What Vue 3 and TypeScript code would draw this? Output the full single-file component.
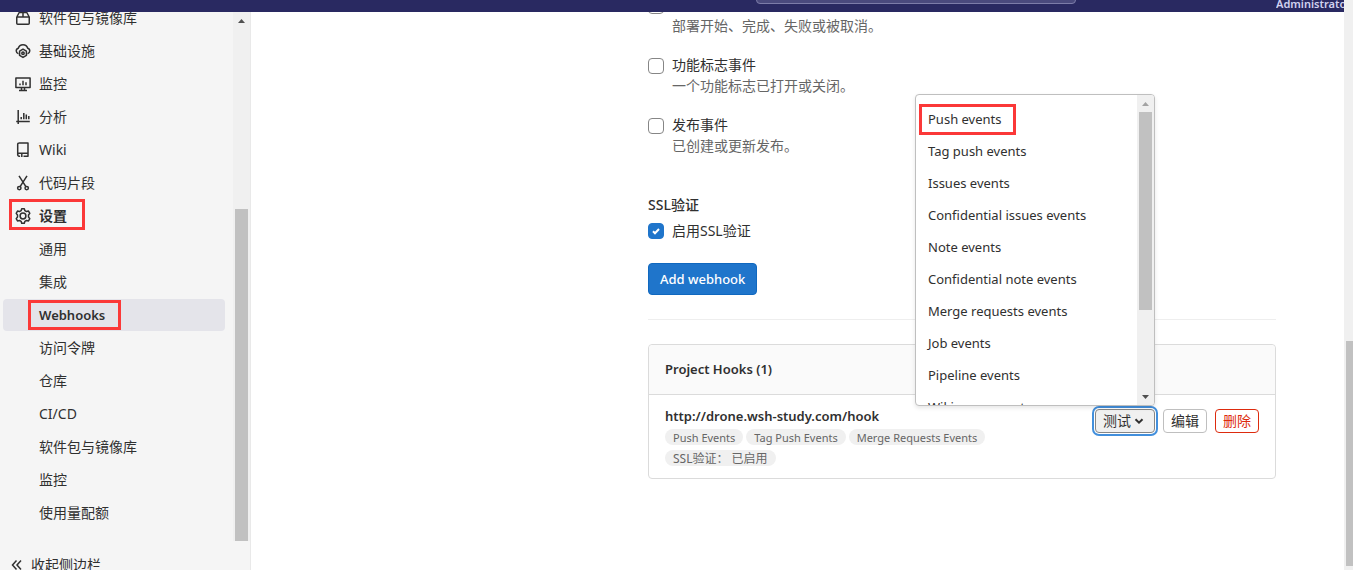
<script setup lang="ts">
import { ref } from 'vue'

interface NavItem {
  label: string
  icon: string
  marked?: boolean
}

interface SubItem {
  label: string
  active?: boolean
}

const navItems: NavItem[] = [
  { label: '软件包与镜像库', icon: 'package' },
  { label: '基础设施', icon: 'cloud' },
  { label: '监控', icon: 'monitor' },
  { label: '分析', icon: 'chart' },
  { label: 'Wiki', icon: 'book' },
  { label: '代码片段', icon: 'snippet' },
  { label: '设置', icon: 'settings', marked: true },
]

const subItems: SubItem[] = [
  { label: '通用' },
  { label: '集成' },
  { label: 'Webhooks', active: true },
  { label: '访问令牌' },
  { label: '仓库' },
  { label: 'CI/CD' },
  { label: '软件包与镜像库' },
  { label: '监控' },
  { label: '使用量配额' },
]

const triggers = ref([
  { id: 'deploy', label: '部署事件', help: '部署开始、完成、失败或被取消。', on: false },
  { id: 'flag', label: '功能标志事件', help: '一个功能标志已打开或关闭。', on: false },
  { id: 'release', label: '发布事件', help: '已创建或更新发布。', on: false },
])
const sslEnabled = ref(true)
const menuOpen = ref(true)

const testEvents: string[] = [
  'Push events',
  'Tag push events',
  'Issues events',
  'Confidential issues events',
  'Note events',
  'Confidential note events',
  'Merge requests events',
  'Job events',
  'Pipeline events',
  'Wiki page events',
]

const hookBadges: string[] = ['Push Events', 'Tag Push Events', 'Merge Requests Events']
</script>

<template>
  <div class="app">
    <div class="view">
      <header class="topbar">
        <input class="search" type="text" aria-label="Search" />
        <a class="user" href="#">Administrator</a>
      </header>

      <div class="body">
        <aside class="sidebar">
          <div class="side-scroll">
            <nav class="side-nav">
              <ul class="nav-list">
                <li v-for="item in navItems" :key="item.icon">
                  <a href="#" class="nav-link" :class="{ current: item.marked }">
                    <svg class="icon" viewBox="0 0 16 16" aria-hidden="true">
                      <g v-if="item.icon === 'package'">
                        <path d="M1.75 7h12.500v6.200a1 1 0 0 1-1 1H2.750a1 1 0 0 1-1-1zM1.750 7 4.200 2.500h7.600L14.250 7M8 2.500V7" />
                      </g>
                      <g v-else-if="item.icon === 'cloud'">
                        <path d="M3.500 10.800A2.900 2.900 0 0 1 3.300 5.200 4.900 4.900 0 0 1 12.700 5.200a2.900 2.900 0 0 1-.2 5.600" />
                        <path d="M8 6.200 11.400 8.200v4.200L8 14.400 4.600 12.400V8.200z" />
                        <circle cx="8" cy="10.300" r="1.200" />
                      </g>
                      <g v-else-if="item.icon === 'monitor'">
                        <path d="M.9 2.100h14.200v9.400H.9zM6.500 11.500v2.700M9.500 11.500v2.700M4 14.400h8M5 7.500v1.800M8 4.800v4.500M11 6.300v3" />
                      </g>
                      <g v-else-if="item.icon === 'chart'">
                        <path d="M3.200 1v14M1.200 12.400h13.600M6.200 8v2.300M8.800 4v6.300M11.300 5.500v4.800M13.800 7v3.300" />
                      </g>
                      <g v-else-if="item.icon === 'book'">
                        <path d="M4 .9h9v10.400H4A1.500 1.500 0 0 0 2.700 13M2.700 13V2.300A1.400 1.400 0 0 1 4.100.9M2.700 12.800a1.400 1.400 0 0 0 1.400 1.400h1M13 11v3.200H8.500M6.800 11.500V15" />
                      </g>
                      <g v-else-if="item.icon === 'snippet'">
                        <path d="M4 .8 10.900 11.600M12 .8 5.100 11.600" />
                        <circle cx="4.300" cy="13.100" r="1.700" />
                        <circle cx="11.700" cy="13.100" r="1.700" />
                      </g>
                      <g v-else>
                        <path d="M6.700.8h2.600l.6 1.900 1.600.9 2-.5 1.300 2.300L13.500 7v2l1.300 1.600-1.300 2.300-2-.5-1.600.9-.6 1.900H6.700l-.6-1.900-1.600-.9-2 .5-1.300-2.300L2.500 9V7L1.200 5.400l1.300-2.300 2 .5 1.600-.9z" />
                        <circle cx="8" cy="8" r="2.900" />
                      </g>
                    </svg>
                    <span>{{ item.label }}</span>
                    <span v-if="item.marked" class="mark mark-settings"></span>
                  </a>
                </li>
                <li v-for="sub in subItems" :key="sub.label">
                  <a href="#" class="nav-link sub" :class="{ active: sub.active }">
                    <span>{{ sub.label }}</span>
                    <span v-if="sub.active" class="mark mark-webhooks"></span>
                  </a>
                </li>
              </ul>
            </nav>
            <div class="track side-track">
              <svg class="arrow dark" viewBox="0 0 17 17" aria-hidden="true"><path d="M5 11h7L8.500 7z" /></svg>
              <div class="space-before"></div>
              <div class="thumb"></div>
            </div>
          </div>
          <div class="side-foot">
            <button type="button" class="collapse">
              <svg class="chevrons" viewBox="0 0 12 12" aria-hidden="true">
                <path d="M5.500 1.500 1.500 6l4 4.500M10 1.500 6 6l4 4.500" />
              </svg>
              <span>收起侧边栏</span>
            </button>
          </div>
        </aside>

        <main class="content">
          <div class="column">
            <form @submit.prevent>
              <div v-for="t in triggers" :key="t.id" class="check">
                <input :id="t.id" v-model="t.on" type="checkbox" class="box" />
                <div>
                  <label :for="t.id" class="event">{{ t.label }}</label>
                  <p class="help">{{ t.help }}</p>
                </div>
              </div>
              <h4 class="group-title">SSL验证</h4>
              <div class="check ssl">
                <input id="ssl" v-model="sslEnabled" type="checkbox" class="box" />
                <label for="ssl">启用SSL验证</label>
              </div>
              <button type="submit" class="primary">Add webhook</button>
            </form>
            <hr class="rule" />
            <section class="card">
              <h5 class="card-head">Project Hooks (1)</h5>
              <div class="hook">
                <div class="hook-info">
                  <div class="hook-url">http://drone.wsh-study.com/hook</div>
                  <div class="badges">
                    <span v-for="b in hookBadges" :key="b" class="badge">{{ b }}</span>
                  </div>
                  <div class="badges">
                    <span class="badge state">SSL验证： 已启用</span>
                  </div>
                </div>
                <div class="actions">
                  <div class="dropdown">
                    <button type="button" class="btn focused" :aria-expanded="menuOpen" @click="menuOpen = !menuOpen">
                      <span>测试</span>
                      <svg class="caret" viewBox="0 0 10 10" aria-hidden="true"><path d="M1.500 3.300 5 6.700l3.500-3.400" /></svg>
                    </button>
                    <div v-if="menuOpen" class="menu">
                      <ul class="menu-list">
                        <li v-for="(e, i) in testEvents" :key="e">
                          <button type="button" class="menu-item">
                            {{ e }}
                            <span v-if="i === 0" class="mark mark-push"></span>
                          </button>
                        </li>
                      </ul>
                      <div class="track menu-track">
                        <svg class="arrow light" viewBox="0 0 17 17" aria-hidden="true"><path d="M5 11h7L8.500 7z" /></svg>
                        <div class="thumb"></div>
                        <svg class="arrow dark" viewBox="0 0 17 17" aria-hidden="true"><path d="M5 7h7L8.500 11z" /></svg>
                      </div>
                    </div>
                  </div>
                  <button type="button" class="btn">编辑</button>
                  <button type="button" class="btn danger">删除</button>
                </div>
              </div>
            </section>
          </div>
        </main>
      </div>
    </div>
    <div class="page-track">
      <div class="space-before"></div>
      <div class="thumb"></div>
    </div>
  </div>
</template>

<style>
body {
  margin: 0;
}
</style>

<style scoped>
* {
  box-sizing: border-box;
}

.app {
  display: flex;
  height: 100vh;
  overflow: hidden;
  background: #fff;
  color: #303030;
  font-family: "Noto Sans", "Noto Sans CJK SC", sans-serif;
  font-size: 14px;
  line-height: 20px;
}

button,
input {
  font: inherit;
  color: inherit;
  margin: 0;
}

ul,
p,
h4,
h5 {
  margin: 0;
  padding: 0;
  list-style: none;
}

a {
  color: inherit;
  text-decoration: none;
}

.view {
  flex: 1;
  min-width: 0;
  display: flex;
  flex-direction: column;
}

.topbar {
  flex: none;
  display: flex;
  justify-content: flex-end;
  align-items: flex-end;
  height: 12px;
  overflow: hidden;
  background: #292961;
}

.search {
  width: 320px;
  height: 32px;
  margin: 0 200px 8px 0;
  border: 1px solid #7c7ca8;
  border-radius: 4px;
  background: #4a4a7d;
}

.user {
  width: 68px;
  overflow: hidden;
  color: #d1d1f0;
  font-size: 11px;
  font-weight: 600;
  line-height: 16px;
  white-space: nowrap;
}

.body {
  flex: 1;
  min-height: 0;
  display: flex;
}

.sidebar {
  flex: none;
  width: 251px;
  display: flex;
  flex-direction: column;
  border-right: 1px solid #e9e9e9;
  background: #f5f5f5;
}

.side-scroll {
  flex: 1;
  min-height: 0;
  display: flex;
}

.side-nav {
  flex: 1;
  overflow: hidden;
}

.nav-list {
  margin: -10px 8px 0 3px;
}

.nav-link {
  position: relative;
  display: flex;
  align-items: center;
  gap: 8px;
  height: 32px;
  margin-bottom: 1px;
  padding: 0 12px;
  border-radius: 4px;
}

.nav-link.sub {
  padding-left: 36px;
}

.nav-link.current {
  font-weight: 600;
}

.nav-link.active {
  background: #e4e4ea;
  font-size: 13px;
  font-weight: 600;
}

.icon {
  width: 16px;
  height: 16px;
  fill: none;
  stroke: #303030;
  stroke-width: 1.5;
  stroke-linejoin: round;
}

.mark {
  position: absolute;
  border: 3px solid #fb3838;
  pointer-events: none;
}

.mark-settings {
  left: 6px;
  top: -1px;
  width: 76px;
  height: 31px;
}

.mark-webhooks {
  left: 25px;
  top: 1px;
  width: 93px;
  height: 30px;
}

.mark-push {
  left: 3px;
  top: 1px;
  width: 97px;
  height: 31px;
}

.track {
  flex: none;
  width: 17px;
  display: flex;
  flex-direction: column;
  align-items: center;
  background: #f0f0f0;
}

.arrow {
  flex: none;
  width: 17px;
  height: 17px;
}

.arrow.dark {
  fill: #505050;
}

.arrow.light {
  fill: #a3a3a3;
}

.thumb {
  width: 13px;
  background: #c1c1c1;
}

.side-track .space-before {
  flex: 180;
}

.side-track .thumb {
  flex: 332;
}

.side-foot {
  flex: none;
  height: 29px;
  overflow: hidden;
}

.collapse {
  display: flex;
  align-items: center;
  gap: 8px;
  width: 100%;
  height: 48px;
  padding: 0 11px;
  border: 0;
  background: none;
}

.chevrons {
  width: 12px;
  height: 12px;
  fill: none;
  stroke: #303030;
  stroke-width: 1.5;
}

.content {
  flex: 1;
  min-width: 0;
  display: grid;
  grid-template-columns: 1fr 2fr;
  padding: 0 52px 0 51px;
  overflow: hidden;
}

.column {
  grid-column: 2;
  margin-top: -16px;
  padding: 0 16px;
}

.check {
  display: flex;
  gap: 8px;
  margin-bottom: 20px;
}

.check > div {
  display: flex;
  flex-direction: column;
}

.event {
  padding-bottom: 2px;
  line-height: 18px;
}

.box {
  flex: none;
  appearance: none;
  width: 16px;
  height: 16px;
  margin-top: 2px;
  border: 1px solid #868686;
  border-radius: 4px;
  background: #fff;
}

.box:checked {
  border-color: #1f75cb;
  background: #1f75cb url("data:image/svg+xml,%3Csvg xmlns='http://www.w3.org/2000/svg' viewBox='0 0 14 14'%3E%3Cpath d='M4 7.200l2 2 4-4.200' fill='none' stroke='white' stroke-width='2'/%3E%3C/svg%3E") center no-repeat;
}

.help {
  color: #666;
}

.group-title {
  margin-top: 39px;
  font-size: 14px;
  font-weight: 500;
}

.ssl {
  margin: 6px 0 22px;
}

.primary {
  display: block;
  height: 32px;
  padding: 0 11px;
  border: 1px solid #1068bf;
  border-radius: 4px;
  background: #1f75cb;
  color: #fff;
  font-size: 13px;
  font-weight: 500;
}

.rule {
  margin: 24px 0;
  border: 0;
  border-top: 1px solid #eee;
}

.card {
  border: 1px solid #dbdbdb;
  border-radius: 4px;
}

.card-head {
  padding: 14px 16px 15px;
  border-bottom: 1px solid #dbdbdb;
  border-radius: 4px 4px 0 0;
  background: #fafafa;
  font-size: 13px;
  font-weight: 600;
}

.hook {
  display: flex;
  justify-content: space-between;
  padding: 11px 16px 12px;
}

.hook-url {
  font-size: 13px;
  font-weight: 600;
}

.badges {
  display: flex;
  gap: 3px;
  margin-top: 3px;
}

.badges + .badges {
  margin-top: 5px;
}

.badge {
  height: 16px;
  padding: 0 8px;
  border-radius: 8px;
  background: #f0f0f0;
  color: #666;
  font-size: 11px;
  line-height: 17px;
}

.badge.state {
  font-size: 12px;
}

.actions {
  display: flex;
  align-items: flex-start;
  gap: 8px;
  margin-top: 3px;
}

.dropdown {
  position: relative;
}

.btn {
  display: flex;
  align-items: center;
  gap: 3px;
  height: 24px;
  padding: 0 7px;
  border: 1px solid #bfbfbf;
  border-radius: 4px;
  background: #fff;
}

.btn.focused {
  width: 60px;
  border-color: #868686;
  background: #f0f0f0;
  box-shadow: 0 0 0 1px #fff, 0 0 0 3px #428fdc;
}

.btn.danger {
  border-color: #dd2b0e;
  color: #dd2b0e;
}

.caret {
  width: 10px;
  height: 10px;
  fill: none;
  stroke: #303030;
  stroke-width: 2;
}

.menu {
  position: absolute;
  right: 0;
  bottom: 27px;
  display: flex;
  width: 240px;
  height: 312px;
  overflow: hidden;
  border: 1px solid #bfbfbf;
  border-radius: 4px;
  background: #fff;
  box-shadow: 0 2px 4px rgba(0, 0, 0, 0.1);
}

.menu-list {
  flex: 1;
  padding-top: 8px;
}

.menu-item {
  position: relative;
  display: block;
  width: 100%;
  height: 32px;
  padding: 0 12px;
  border: 0;
  background: none;
  font-size: 13px;
  text-align: left;
}

.menu-track .thumb {
  height: 198px;
  margin-bottom: auto;
}

.page-track {
  flex: none;
  width: 9px;
  display: flex;
  flex-direction: column;
  padding: 0 0 4px 2px;
  background: #f0f0f0;
}

.page-track .space-before {
  flex: 341;
}

.page-track .thumb {
  flex: 225;
  width: 100%;
}
</style>
